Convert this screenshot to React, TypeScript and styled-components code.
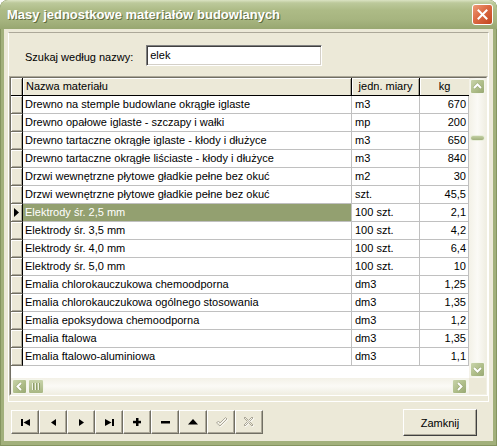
import React from 'react';
import styled, {createGlobalStyle} from 'styled-components';

const GlobalStyle = createGlobalStyle`
  html, body {
    margin: 0;
    padding: 0;
    background: #ffffff;
  }
  body {
    font-family: "Liberation Sans", Arial, sans-serif;
    font-size: 11px;
  }
`;

const Window = styled.div`
  width: 497px;
  height: 446px;
  display: flex;
  flex-direction: column;
  background: #a2b07b;
  border-radius: 8px 8px 0 0;
  overflow: hidden;
  box-shadow: inset 1px 0 #85945f, inset -1px 0 #85945f, inset 0 -1px #85945f;
`;

const TitleBar = styled.div`
  height: 29px;
  flex: none;
  display: flex;
  align-items: center;
  padding-left: 7px;
  padding-right: 4px;
  background: linear-gradient(
    to bottom,
    #dbe3c3 0%,
    #bcc99b 10%,
    #adbb86 35%,
    #a6b47f 70%,
    #98a771 100%
  );
  border-radius: 8px 8px 0 0;
`;

const Title = styled.div`
  flex: 1;
  color: #ffffff;
  font-weight: bold;
  font-size: 13px;
  text-shadow: 1px 1px 0 #5f6c3d;
  white-space: nowrap;
`;

const CloseButton = styled.div`
  width: 19px;
  height: 19px;
  border: 1px solid #ffffff;
  border-radius: 3px;
  background: linear-gradient(135deg, #ee9b78 0%, #dc6a43 45%, #c2461f 100%);
  display: flex;
  align-items: center;
  justify-content: center;
`;

const Body = styled.div`
  flex: 1;
  margin: 0 4px 5px;
  background: #ece9d8;
  display: flex;
  flex-direction: column;
`;

const MainPanel = styled.div`
  margin: 3px 4px 0;
  height: 370px;
  box-sizing: border-box;
  border: 1px solid;
  border-color: #aca899 #ffffff #ffffff #ffffff;
  display: flex;
  flex-direction: column;
`;

const SearchRow = styled.div`
  height: 43px;
  box-sizing: border-box;
  padding: 12px 0 0 16px;
  display: flex;
  align-items: flex-start;
  gap: 13px;
`;

const SearchLabel = styled.label`
  margin-top: 5px;
  color: #000000;
  font-size: 11px;
  line-height: 14px;
  white-space: nowrap;
`;

const SearchInput = styled.div`
  width: 176px;
  height: 21px;
  box-sizing: border-box;
  background: #ffffff;
  border: 1px solid;
  border-color: #808080 #ffffff #ffffff #808080;
  box-shadow: inset 1px 1px #404040, inset -1px -1px #d4d0c8;
  padding: 3px 3px 0;
  font-size: 11px;
  line-height: 13px;
`;

const GridFrame = styled.div`
  height: 320px;
  box-sizing: border-box;
  border: 1px solid;
  border-color: #aca899 #ffffff #ffffff #aca899;
`;

const GridInner = styled.div`
  height: 100%;
  box-sizing: border-box;
  border: 1px solid;
  border-color: #716f64 #f1efe2 #f1efe2 #716f64;
  display: grid;
  grid-template-columns: 1fr 17px;
  grid-template-rows: 1fr 16px;
  background: #ffffff;
`;

const Table = styled.div`
  overflow: hidden;
  background: #ffffff;
`;

const Row = styled.div`
  display: grid;
  grid-template-columns: 12px 329px 68px 49px;
  height: 18px;
`;

const HeaderCell = styled.div<{$align?: 'left' | 'center'}>`
  box-sizing: border-box;
  background: #ece9d8;
  border-right: 1px solid #000000;
  border-bottom: 1px solid #000000;
  box-shadow: inset 1px 1px #ffffff, inset -1px 0 #aca899;
  padding: 0 3px;
  text-align: ${p => p.$align ?? 'left'};
  line-height: 17px;
  white-space: nowrap;
  overflow: hidden;
  &:last-child {
    border-right: none;
    box-shadow: inset 1px 1px #ffffff;
  }
`;

const Indicator = styled.div`
  box-sizing: border-box;
  background: #ece9d8;
  border-right: 1px solid #000000;
  border-bottom: 1px solid #716f64;
  box-shadow: inset 1px 1px #ffffff, inset -1px -1px #aca899;
  display: flex;
  align-items: center;
  justify-content: center;
`;

const Cell = styled.div<{$align?: 'left' | 'right'; $selected?: boolean}>`
  box-sizing: border-box;
  border-right: 1px solid #c0c0c0;
  border-bottom: 1px solid #c0c0c0;
  padding: ${p => (p.$align === 'right' ? '0 2px 0 0' : '0 0 0 3px')};
  text-align: ${p => p.$align ?? 'left'};
  line-height: 17px;
  white-space: nowrap;
  overflow: hidden;
  color: #000000;
`;

const NameCell = styled(Cell)`
  background: ${p => (p.$selected ? '#93a070' : 'transparent')};
  color: ${p => (p.$selected ? '#ffffff' : '#000000')};
  padding: 0;
  & > span {
    display: block;
    padding-left: 2px;
  }
`;

const VScroll = styled.div`
  display: flex;
  flex-direction: column;
  align-items: center;
  padding: 1px 0 1px;
  box-sizing: border-box;
  background: linear-gradient(to right, #f3f1e7 0%, #fbfaf6 50%, #f0eee3 100%);
`;

const HScroll = styled.div`
  display: flex;
  align-items: center;
  padding: 0 2px 0 1px;
  box-sizing: border-box;
  background: linear-gradient(to bottom, #f3f1e7 0%, #fbfaf6 50%, #f0eee3 100%);
`;

const Track = styled.div`
  flex: 1;
  align-self: stretch;
  display: flex;
  flex-direction: column;
  align-items: center;
`;

const HTrack = styled.div`
  flex: 1;
`;

const ScrollButton = styled.div`
  width: 15px;
  height: 15px;
  flex: none;
  box-sizing: border-box;
  border: 1px solid #f4f6ec;
  border-radius: 2px;
  background: linear-gradient(135deg, #c9d4ab 0%, #aebd88 55%, #98a873 100%);
  display: flex;
  align-items: center;
  justify-content: center;
`;

const VThumb = styled.div`
  margin-top: 41px;
  width: 15px;
  height: 6px;
  box-sizing: border-box;
  border: 1px solid #e9eedb;
  border-radius: 3px;
  background: linear-gradient(to bottom, #c3cfa3, #a1b07c);
`;

const HThumb = styled.div`
  width: 16px;
  height: 15px;
  margin-left: 1px;
  box-sizing: border-box;
  border: 1px solid #f4f6ec;
  border-radius: 2px;
  background: linear-gradient(to bottom, #c8d3aa, #a8b784);
  display: flex;
  align-items: center;
  justify-content: center;
  gap: 1px;
`;

const Grip = styled.div`
  width: 1px;
  height: 7px;
  background: #eef2e3;
  box-shadow: 1px 0 #8e9d6a;
  margin-right: 1px;
`;

const Corner = styled.div`
  background: #ece9d8;
`;

const BottomBar = styled.div`
  flex: 1;
  display: flex;
  align-items: flex-start;
  padding: 8px 16px 0 7px;
`;

const Navigator = styled.div`
  display: flex;
`;

const NavButton = styled.div`
  width: 28px;
  height: 24px;
  box-sizing: border-box;
  background: #ece9d8;
  border: 1px solid;
  border-color: #ffffff #716f64 #716f64 #ffffff;
  box-shadow: inset -1px -1px #aca899;
  display: flex;
  align-items: center;
  justify-content: center;
`;

const CloseDialogButton = styled.div`
  margin-left: auto;
  margin-top: -1px;
  width: 74px;
  height: 27px;
  box-sizing: border-box;
  background: #ece9d8;
  border: 1px solid;
  border-color: #ffffff #404040 #404040 #ffffff;
  box-shadow: inset -1px -1px #aca899;
  display: flex;
  align-items: center;
  justify-content: center;
  font-size: 11px;
  color: #000000;
`;

type Material = {name: string; unit: string; kg: string};

const materials: Material[] = [
  {name: 'Drewno na stemple budowlane okrągłe iglaste', unit: 'm3', kg: '670'},
  {name: 'Drewno opałowe iglaste - szczapy i wałki', unit: 'mp', kg: '200'},
  {name: 'Drewno tartaczne okrągłe iglaste - kłody i dłużyce', unit: 'm3', kg: '650'},
  {name: 'Drewno tartaczne okrągłe liściaste - kłody i dłużyce', unit: 'm3', kg: '840'},
  {name: 'Drzwi wewnętrzne płytowe gładkie pełne bez okuć', unit: 'm2', kg: '30'},
  {name: 'Drzwi wewnętrzne płytowe gładkie pełne bez okuć', unit: 'szt.', kg: '45,5'},
  {name: 'Elektrody śr. 2,5 mm', unit: '100 szt.', kg: '2,1'},
  {name: 'Elektrody śr. 3,5 mm', unit: '100 szt.', kg: '4,2'},
  {name: 'Elektrody śr. 4,0 mm', unit: '100 szt.', kg: '6,4'},
  {name: 'Elektrody śr. 5,0 mm', unit: '100 szt.', kg: '10'},
  {name: 'Emalia chlorokauczukowa chemoodporna', unit: 'dm3', kg: '1,25'},
  {name: 'Emalia chlorokauczukowa ogólnego stosowania', unit: 'dm3', kg: '1,35'},
  {name: 'Emalia epoksydowa chemoodporna', unit: 'dm3', kg: '1,2'},
  {name: 'Emalia ftalowa', unit: 'dm3', kg: '1,35'},
  {name: 'Emalia ftalowo-aluminiowa', unit: 'dm3', kg: '1,1'},
];

const SELECTED = 6;

const Chevron: React.FC<{dir: 'up' | 'down' | 'left' | 'right'}> = ({dir}) => {
  const pts = {
    up: '2,7 5.5,3.5 9,7',
    down: '2,4 5.5,7.5 9,4',
    left: '7,2 3.5,5.5 7,9',
    right: '4,2 7.5,5.5 4,9',
  }[dir];
  return (
    <svg width="11" height="11" viewBox="0 0 11 11">
      <polyline points={pts} fill="none" stroke="#5d6b3a" strokeWidth="3" opacity="0.35" />
      <polyline points={pts} fill="none" stroke="#ffffff" strokeWidth="2" />
    </svg>
  );
};

const NavIcon: React.FC<{kind: string}> = ({kind}) => {
  switch (kind) {
    case 'first':
      return (
        <svg width="9" height="7" viewBox="0 0 9 7">
          <rect x="0" y="0" width="2" height="7" fill="#000" />
          <polygon points="9,0 9,7 2.5,3.5" fill="#000" />
        </svg>
      );
    case 'prior':
      return (
        <svg width="5" height="7" viewBox="0 0 5 7">
          <polygon points="5,0 5,7 0,3.5" fill="#000" />
        </svg>
      );
    case 'next':
      return (
        <svg width="5" height="7" viewBox="0 0 5 7">
          <polygon points="0,0 0,7 5,3.5" fill="#000" />
        </svg>
      );
    case 'last':
      return (
        <svg width="9" height="7" viewBox="0 0 9 7">
          <polygon points="0,0 0,7 6.5,3.5" fill="#000" />
          <rect x="7" y="0" width="2" height="7" fill="#000" />
        </svg>
      );
    case 'insert':
      return (
        <svg width="8" height="8" viewBox="0 0 8 8">
          <rect x="3" y="0" width="2.5" height="8" fill="#000" />
          <rect x="0" y="2.8" width="8" height="2.5" fill="#000" />
        </svg>
      );
    case 'delete':
      return (
        <svg width="9" height="3" viewBox="0 0 9 3">
          <rect x="0" y="0" width="9" height="2.5" fill="#000" />
        </svg>
      );
    case 'edit':
      return (
        <svg width="10" height="6" viewBox="0 0 10 6">
          <polygon points="0,5.5 10,5.5 5,0" fill="#000" />
        </svg>
      );
    case 'post':
      return (
        <svg width="13" height="11" viewBox="0 0 13 11">
          <polygon
            points="1.5,6 3.5,4 5,6 10.5,0.5 12,2 5,9"
            fill="none"
            stroke="#ffffff"
            strokeWidth="1"
            transform="translate(0.7,0.7)"
          />
          <polygon
            points="1.5,6 3.5,4 5,6 10.5,0.5 12,2 5,9"
            fill="none"
            stroke="#aca899"
            strokeWidth="1"
          />
        </svg>
      );
    case 'cancel':
      return (
        <svg width="12" height="12" viewBox="0 0 12 12">
          <polygon
            points="1,2 2,1 5.5,4.5 9,1 10,2 6.5,5.5 10,9 9,10 5.5,6.5 2,10 1,9 4.5,5.5"
            fill="none"
            stroke="#ffffff"
            strokeWidth="1"
            transform="translate(0.7,0.7)"
          />
          <polygon
            points="1,2 2,1 5.5,4.5 9,1 10,2 6.5,5.5 10,9 9,10 5.5,6.5 2,10 1,9 4.5,5.5"
            fill="none"
            stroke="#aca899"
            strokeWidth="1"
          />
        </svg>
      );
    default:
      return null;
  }
};

const navKinds = ['first', 'prior', 'next', 'last', 'insert', 'delete', 'edit', 'post', 'cancel'];

const App: React.FC = () => {
  return (
    <>
      <GlobalStyle />
      <Window>
        <TitleBar>
          <Title>Masy jednostkowe materiałów budowlanych</Title>
          <CloseButton>
            <svg width="11" height="11" viewBox="0 0 11 11">
              <path d="M1.5 1.5 L9.5 9.5 M9.5 1.5 L1.5 9.5" stroke="#ffffff" strokeWidth="2" strokeLinecap="square" />
            </svg>
          </CloseButton>
        </TitleBar>
        <Body>
          <MainPanel>
            <SearchRow>
              <SearchLabel>Szukaj według nazwy:</SearchLabel>
              <SearchInput>elek</SearchInput>
            </SearchRow>
            <GridFrame>
              <GridInner>
                <Table>
                  <Row>
                    <HeaderCell />
                    <HeaderCell>Nazwa materiału</HeaderCell>
                    <HeaderCell $align="center">jedn. miary</HeaderCell>
                    <HeaderCell $align="center">kg</HeaderCell>
                  </Row>
                  {materials.map((m, i) => (
                    <Row key={i}>
                      <Indicator>
                        {i === SELECTED && (
                          <svg width="5" height="9" viewBox="0 0 5 9">
                            <polygon points="0,0 5,4.5 0,9" fill="#000" />
                          </svg>
                        )}
                      </Indicator>
                      <NameCell $selected={i === SELECTED}>
                        <span>{m.name}</span>
                      </NameCell>
                      <Cell>{m.unit}</Cell>
                      <Cell $align="right">{m.kg}</Cell>
                    </Row>
                  ))}
                </Table>
                <VScroll>
                  <ScrollButton>
                    <Chevron dir="up" />
                  </ScrollButton>
                  <Track>
                    <VThumb />
                  </Track>
                  <ScrollButton>
                    <Chevron dir="down" />
                  </ScrollButton>
                </VScroll>
                <HScroll>
                  <ScrollButton>
                    <Chevron dir="left" />
                  </ScrollButton>
                  <HThumb>
                    <Grip />
                    <Grip />
                    <Grip />
                  </HThumb>
                  <HTrack />
                  <ScrollButton>
                    <Chevron dir="right" />
                  </ScrollButton>
                </HScroll>
                <Corner />
              </GridInner>
            </GridFrame>
          </MainPanel>
          <BottomBar>
            <Navigator>
              {navKinds.map(k => (
                <NavButton key={k}>
                  <NavIcon kind={k} />
                </NavButton>
              ))}
            </Navigator>
            <CloseDialogButton>Zamknij</CloseDialogButton>
          </BottomBar>
        </Body>
      </Window>
    </>
  );
};

export default App;
